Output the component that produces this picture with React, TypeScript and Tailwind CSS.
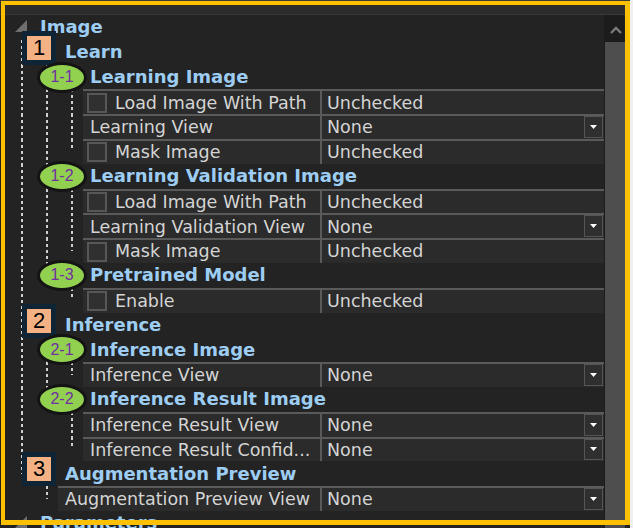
import React from "react";

type Marker = { kind: "box" | "oval"; text: string };
type Item = {
  label: string;
  type: "cat" | "prop";
  marker?: Marker;
  check?: boolean;
  value?: string;
  dropdown?: boolean;
  children?: Item[];
};

const data: Item[] = [
  {
    label: "Image",
    type: "cat",
    children: [
      {
        label: "Learn",
        type: "cat",
        marker: { kind: "box", text: "1" },
        children: [
          {
            label: "Learning Image",
            type: "cat",
            marker: { kind: "oval", text: "1-1" },
            children: [
              { label: "Load Image With Path", type: "prop", check: true, value: "Unchecked" },
              { label: "Learning View", type: "prop", value: "None", dropdown: true },
              { label: "Mask Image", type: "prop", check: true, value: "Unchecked" },
            ],
          },
          {
            label: "Learning Validation Image",
            type: "cat",
            marker: { kind: "oval", text: "1-2" },
            children: [
              { label: "Load Image With Path", type: "prop", check: true, value: "Unchecked" },
              { label: "Learning Validation View", type: "prop", value: "None", dropdown: true },
              { label: "Mask Image", type: "prop", check: true, value: "Unchecked" },
            ],
          },
          {
            label: "Pretrained Model",
            type: "cat",
            marker: { kind: "oval", text: "1-3" },
            children: [{ label: "Enable", type: "prop", check: true, value: "Unchecked" }],
          },
        ],
      },
      {
        label: "Inference",
        type: "cat",
        marker: { kind: "box", text: "2" },
        children: [
          {
            label: "Inference Image",
            type: "cat",
            marker: { kind: "oval", text: "2-1" },
            children: [{ label: "Inference View", type: "prop", value: "None", dropdown: true }],
          },
          {
            label: "Inference Result Image",
            type: "cat",
            marker: { kind: "oval", text: "2-2" },
            children: [
              { label: "Inference Result View", type: "prop", value: "None", dropdown: true },
              { label: "Inference Result Confid...", type: "prop", value: "None", dropdown: true },
            ],
          },
        ],
      },
      {
        label: "Augmentation Preview",
        type: "cat",
        marker: { kind: "box", text: "3" },
        children: [{ label: "Augmentation Preview View", type: "prop", value: "None", dropdown: true }],
      },
    ],
  },
  { label: "Parameters", type: "cat" },
];

type Row = { item: Item; depth: number; lasts: boolean[] };

const flatten = (items: Item[], depth: number, lasts: boolean[], out: Row[]) => {
  items.forEach((item, i) => {
    const l = depth === 0 ? [] : [...lasts, i === items.length - 1];
    out.push({ item, depth, lasts: l });
    if (item.children) flatten(item.children, depth + 1, l, out);
  });
  return out;
};

// dotted tree guides, one 25px cell per level
const Guides = ({ depth, lasts }: { depth: number; lasts: boolean[] }) => (
  <div className="flex h-full shrink-0 pl-[8px]">
    {lasts.map((last, i) => {
      const mode = i === depth - 1 ? (last ? "half" : "full") : last ? "none" : "full";
      return (
        <div key={i} className="h-full w-[25px]">
          {mode === "full" && (
            <div className="ml-[13px] h-full w-[2px] bg-[repeating-linear-gradient(to_bottom,#cfcfcf_0px,#cfcfcf_3px,transparent_3px,transparent_6px)]" />
          )}
          {mode === "half" && (
            <div className="ml-[13px] h-1/2 w-[2px] bg-[repeating-linear-gradient(to_bottom,#cfcfcf_0px,#cfcfcf_3px,transparent_3px,transparent_6px)]" />
          )}
        </div>
      );
    })}
  </div>
);

const MarkerBadge = ({ marker }: { marker: Marker }) =>
  marker.kind === "box" ? (
    <div className="absolute left-[22px] top-[-9px] z-10 flex h-[34px] w-[34px] items-center justify-center border-[5px] border-[#0f2434] bg-[#f4b183] font-['Liberation_Sans',sans-serif] text-[22px] leading-none text-black">
      {marker.text}
    </div>
  ) : (
    <div className="absolute left-[37px] top-[-3px] z-10 flex h-[31px] w-[50px] items-center justify-center rounded-[50%] border-[3px] border-[#141414] bg-[#92d050] font-['Liberation_Sans',sans-serif] text-[16px] leading-none text-[#7030a0]">
      {marker.text}
    </div>
  );

const CategoryRow = ({ row }: { row: Row }) => (
  <div className="relative flex h-[24.8px] items-center">
    <Guides depth={row.depth} lasts={row.lasts} />
    <div className="flex h-full w-[32px] shrink-0 items-center pl-[7px]">
      {row.depth === 0 && (
        <svg width="12" height="12" viewBox="0 0 12 12" className="-mt-[2px]">
          <polygon points="12,0 12,12 0,12" fill="#6f6f6f" />
        </svg>
      )}
    </div>
    <span className="-mt-px whitespace-nowrap text-[18px] font-bold text-[#9dcdf2]">{row.item.label}</span>
    {row.item.marker && <MarkerBadge marker={row.item.marker} />}
  </div>
);

const PropertyRow = ({ row }: { row: Row }) => {
  const { item } = row;
  return (
    <div className="flex h-[24.8px] text-[17.5px] text-[#d4d4d4]">
      <div className="flex w-[320px] shrink-0">
        <Guides depth={row.depth} lasts={row.lasts} />
        <div
          className={
            item.check
              ? "flex min-w-0 flex-1 items-center border-t-2 border-[#5a5a5a] bg-[#2b2b2b] pl-[4px]"
              : "flex min-w-0 flex-1 items-center border-t-2 border-[#5a5a5a] bg-[#2b2b2b] pl-[7px]"
          }
        >
          {item.check && <div className="mr-[8px] h-[20px] w-[20px] shrink-0 border-2 border-[#575757] bg-[#303030]" />}
          <span className="whitespace-nowrap">{item.label}</span>
        </div>
      </div>
      <div className="flex flex-1 border-t-2 border-l-2 border-[#5a5a5a] bg-[#2b2b2b]">
        <span className="flex flex-1 items-center pl-[5px]">{item.value}</span>
        {item.dropdown && (
          <div className="mb-px mr-px flex w-[19px] items-center justify-center border-[1.5px] border-[#555555] bg-[#2f2f2f]">
            <svg width="7" height="4" viewBox="0 0 7 4">
              <polygon points="0,0 7,0 3.5,4" fill="#ffffff" />
            </svg>
          </div>
        )}
      </div>
    </div>
  );
};

export default function App() {
  const rows = flatten(data, 0, [], []);

  return (
    <div className="relative h-[528px] w-[633px] overflow-hidden bg-[#f0f0f0] font-['DejaVu_Sans',sans-serif]">
      <div className="flex h-full w-[630px] flex-col bg-[#232323]">
        {/* grid header strip */}
        <div className="h-[15px] shrink-0 border-t border-b border-t-[#3c3c3c] border-b-[#393939] bg-[#2c2c2c]" />

        <div className="flex min-h-0 flex-1">
          {/* property tree */}
          <div className="w-[604px] shrink-0 overflow-hidden">
            {rows.map((row, i) =>
              row.item.type === "cat" ? <CategoryRow key={i} row={row} /> : <PropertyRow key={i} row={row} />
            )}
          </div>

          {/* scrollbar */}
          <div className="flex w-[21px] shrink-0 flex-col bg-[#1c1c1c]">
            <div className="flex h-[27px] shrink-0 items-center justify-center pl-[2px] pt-[2px]">
              <svg width="12" height="8" viewBox="0 0 12 8">
                <polyline points="1,7 6,2 11,7" fill="none" stroke="#7b7b7b" strokeWidth="2.4" />
              </svg>
            </div>
            <div className="ml-px flex-1 bg-[#4e4e4e]" />
          </div>
        </div>
      </div>

      {/* yellow annotation frame */}
      <div className="pointer-events-none absolute left-px top-px h-[524px] w-[629px] border-t-4 border-l-4 border-r-[5px] border-b-[5px] border-[#ffc000]" />
    </div>
  );
}
